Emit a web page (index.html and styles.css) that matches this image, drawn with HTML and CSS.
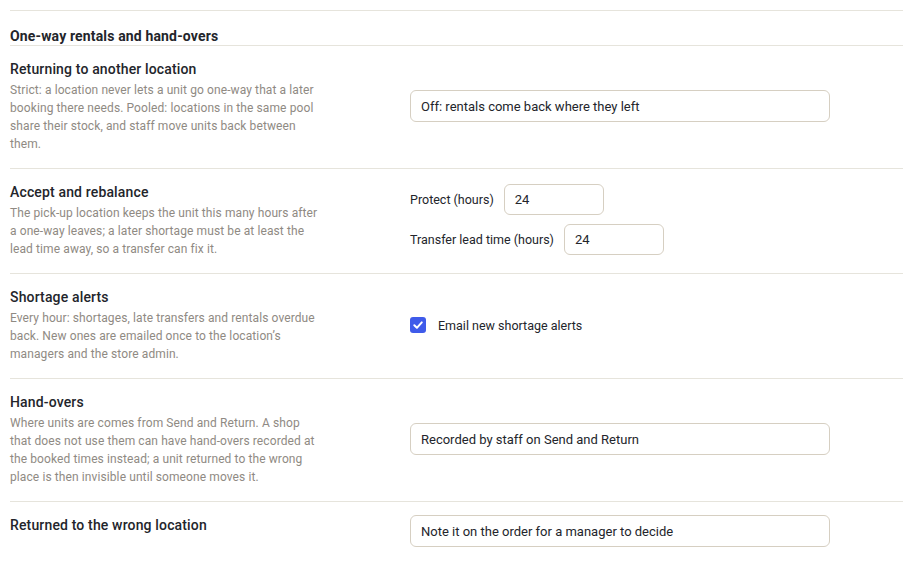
FILE: index.html
```html
<!DOCTYPE html>
<html>
<head>
    <title>One-way rentals</title>
    <link rel="stylesheet" href="styles.css">
</head>
<body>
    <div class="settings">
        <h2 class="section-title">One-way rentals and hand-overs</h2>

        <div class="row">
            <div class="info">
                <div class="name">Returning to another location</div>
                <div class="desc">Strict: a location never lets a unit go one-way that a later booking there needs. Pooled: locations in the same pool share their stock, and staff move units back between them.</div>
            </div>
            <div class="control">
                <div class="field wide">Off: rentals come back where they left</div>
            </div>
        </div>

        <div class="row">
            <div class="info">
                <div class="name">Accept and rebalance</div>
                <div class="desc">The pick-up location keeps the unit this many hours after a one-way leaves; a later shortage must be at least the lead time away, so a transfer can fix it.</div>
            </div>
            <div class="control stack">
                <label class="inline">Protect (hours) <span class="field small">24</span></label>
                <label class="inline">Transfer lead time (hours) <span class="field small">24</span></label>
            </div>
        </div>

        <div class="row">
            <div class="info">
                <div class="name">Shortage alerts</div>
                <div class="desc">Every hour: shortages, late transfers and rentals overdue back. New ones are emailed once to the location’s managers and the store admin.</div>
            </div>
            <div class="control">
                <label class="check">
                    <span class="box">
                        <svg width="12" height="12" viewBox="0 0 12 12"><path d="M2.3 6.3 L4.9 8.8 L9.8 3.4" fill="none" stroke="#fff" stroke-width="2" stroke-linecap="round" stroke-linejoin="round"/></svg>
                    </span>
                    Email new shortage alerts
                </label>
            </div>
        </div>

        <div class="row">
            <div class="info">
                <div class="name">Hand-overs</div>
                <div class="desc">Where units are comes from Send and Return. A shop that does not use them can have hand-overs recorded at the booked times instead; a unit returned to the wrong place is then invisible until someone moves it.</div>
            </div>
            <div class="control">
                <div class="field wide">Recorded by staff on Send and Return</div>
            </div>
        </div>

        <div class="row last">
            <div class="info">
                <div class="name">Returned to the wrong location</div>
            </div>
            <div class="control">
                <div class="field wide">Note it on the order for a manager to decide</div>
            </div>
        </div>
    </div>
</body>
</html>
```

FILE: styles.css
```css
body {
    margin: 0;
    background: #fff;
    font-family: Roboto, "Liberation Sans", sans-serif;
    color: #23252b;
}

.settings {
    padding: 10px 0 0 10px;
}

.section-title {
    margin: 0;
    padding: 16px 0 0;
    font-size: 14px;
    font-weight: 700;
    letter-spacing: 0.15px;
    line-height: 18px;
    border-top: 1px solid #e6e4dc;
    border-bottom: 1px solid #e6e4dc;
}

.row {
    display: grid;
    grid-template-columns: 400px 1fr;
    padding: 13px 0 15px;
    border-bottom: 1px solid #e6e4dc;
}

.row.last {
    border-bottom: 0;
}

.info {
    align-self: start;
}

.name {
    font-size: 14px;
    font-weight: 500;
    letter-spacing: 0.15px;
    line-height: 20px;
}

.desc {
    width: 312px;
    margin-top: 2px;
    font-size: 12px;
    letter-spacing: 0.1px;
    line-height: 18px;
    color: #8f8a83;
}

.control {
    align-self: center;
}

.stack {
    display: flex;
    flex-direction: column;
    gap: 9px;
    margin-top: -2px;
}

.field {
    box-sizing: border-box;
    height: 32px;
    display: flex;
    align-items: center;
    padding: 0 10px;
    border: 1px solid #d6cfc2;
    border-radius: 6px;
    font-size: 13px;
    color: #23252b;
    background: #fff;
}

.wide {
    width: 420px;
}

.small {
    width: 100px;
    height: 31px;
}

.inline {
    display: flex;
    align-items: center;
    gap: 10px;
    font-size: 12.5px;
}

.check {
    display: flex;
    align-items: center;
    gap: 12px;
    font-size: 12.5px;
}

.box {
    width: 16px;
    height: 16px;
    border-radius: 3px;
    background: #3f5bea;
    display: flex;
    align-items: center;
    justify-content: center;
}
```
